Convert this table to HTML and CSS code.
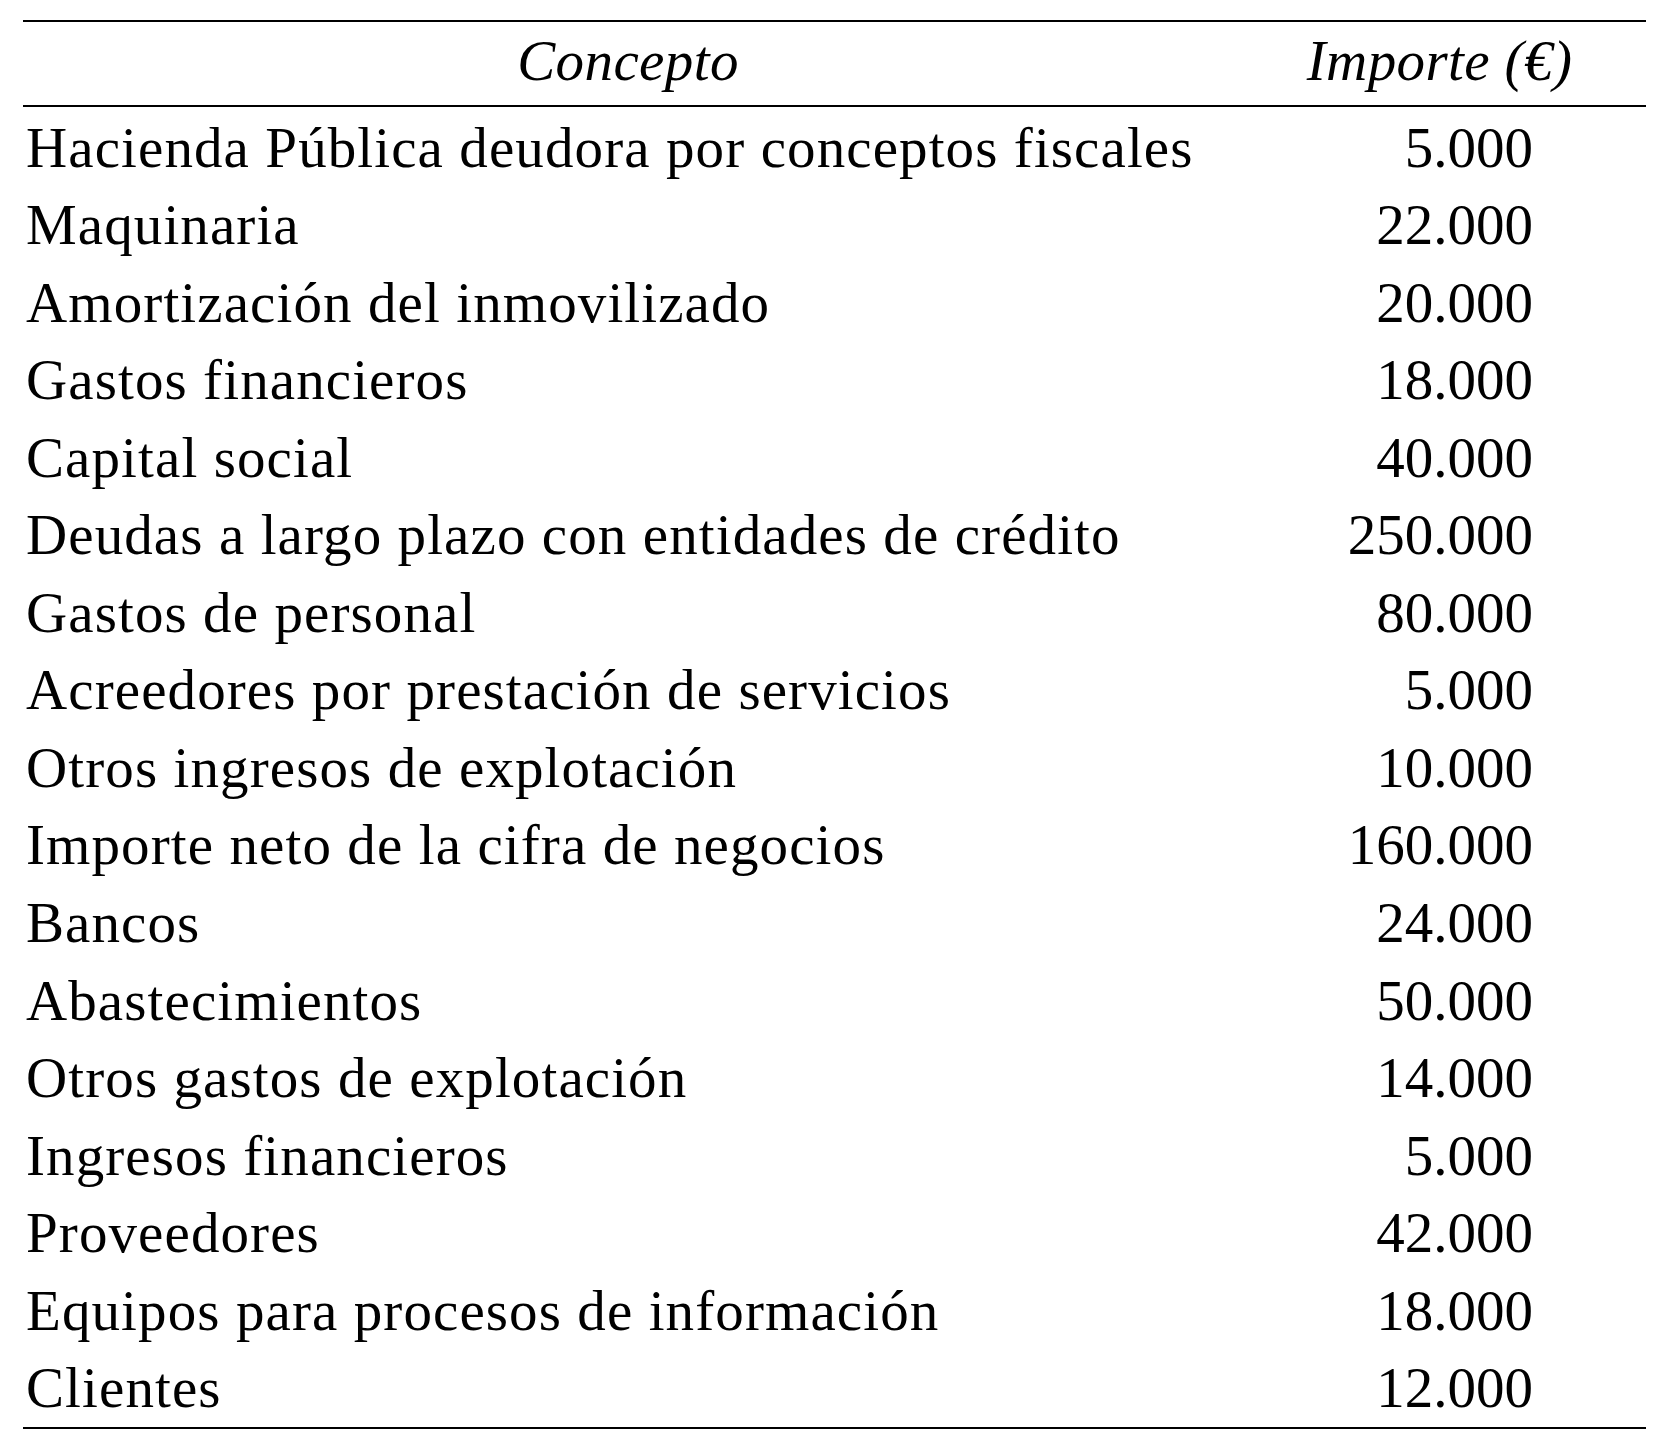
FILE: index.html
```html
<!DOCTYPE html>
<html lang="es">
<head>
<meta charset="utf-8">
<title>Tabla de conceptos</title>
<link rel="stylesheet" href="styles.css">
</head>
<body>
<div class="sheet">
  <div class="head">
    <div class="hcell">Concepto</div>
    <div class="hcell">Importe (€)</div>
  </div>
  <div class="rows">
    <div class="row"><div class="name">Hacienda Pública deudora por conceptos fiscales</div><div class="num">5.000</div></div>
    <div class="row"><div class="name">Maquinaria</div><div class="num">22.000</div></div>
    <div class="row"><div class="name">Amortización del inmovilizado</div><div class="num">20.000</div></div>
    <div class="row"><div class="name">Gastos financieros</div><div class="num">18.000</div></div>
    <div class="row"><div class="name">Capital social</div><div class="num">40.000</div></div>
    <div class="row"><div class="name">Deudas a largo plazo con entidades de crédito</div><div class="num">250.000</div></div>
    <div class="row"><div class="name">Gastos de personal</div><div class="num">80.000</div></div>
    <div class="row"><div class="name">Acreedores por prestación de servicios</div><div class="num">5.000</div></div>
    <div class="row"><div class="name">Otros ingresos de explotación</div><div class="num">10.000</div></div>
    <div class="row"><div class="name">Importe neto de la cifra de negocios</div><div class="num">160.000</div></div>
    <div class="row"><div class="name">Bancos</div><div class="num">24.000</div></div>
    <div class="row"><div class="name">Abastecimientos</div><div class="num">50.000</div></div>
    <div class="row"><div class="name">Otros gastos de explotación</div><div class="num">14.000</div></div>
    <div class="row"><div class="name">Ingresos financieros</div><div class="num">5.000</div></div>
    <div class="row"><div class="name">Proveedores</div><div class="num">42.000</div></div>
    <div class="row"><div class="name">Equipos para procesos de información</div><div class="num">18.000</div></div>
    <div class="row"><div class="name">Clientes</div><div class="num">12.000</div></div>
  </div>
</div>
</body>
</html>
```
FILE: styles.css
```css
html, body {
  margin: 0;
  padding: 0;
  background: #ffffff;
}

body {
  font-family: "Liberation Serif", "DejaVu Serif", serif;
  color: #000000;
  font-size: 57px;
  line-height: 77.56px;
}

.sheet {
  width: 1623px;
  margin: 20px 0 0 23px;
  border-top: 2px solid #000;
  border-bottom: 2px solid #000;
}

.head {
  display: grid;
  grid-template-columns: 1210px 413px;
  border-bottom: 2px solid #000;
  padding-bottom: 5px;
}

.hcell {
  font-style: italic;
  text-align: center;
  letter-spacing: 0.4px;
}

.rows {
  padding-top: 2px;
}

.row {
  display: grid;
  grid-template-columns: 1210px 413px;
  height: 77.56px;
}

.name {
  padding-left: 3px;
  white-space: nowrap;
  letter-spacing: 1.1px;
}

.num {
  text-align: right;
  padding-right: 113px;
}
```
